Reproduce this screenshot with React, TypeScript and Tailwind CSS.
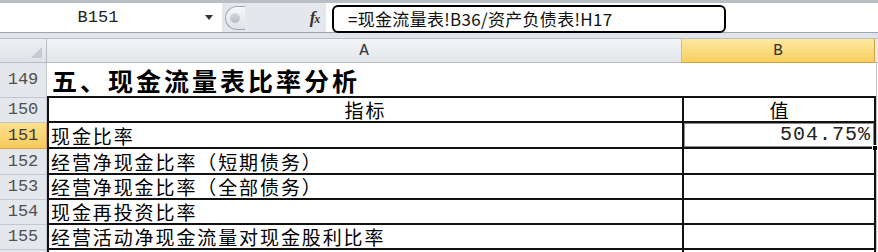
import React from 'react';

const cjk = '"Noto Sans CJK SC", "Noto Sans", sans-serif';
const mono = '"Liberation Mono", "DejaVu Sans Mono", monospace';

type Row = {
  n: number;
  a: string;
  b?: string;
  h: string;
  head?: boolean;
  sel?: boolean;
};

const rows: Row[] = [
  { n: 150, a: '指标', b: '值', h: 'h-[25px]', head: true },
  { n: 151, a: '现金比率', b: '504.75%', h: 'h-[26px]', sel: true },
  { n: 152, a: '经营净现金比率（短期债务）', h: 'h-[26px]' },
  { n: 153, a: '经营净现金比率（全部债务）', h: 'h-[25px]' },
  { n: 154, a: '现金再投资比率', h: 'h-[25px]' },
  { n: 155, a: '经营活动净现金流量对现金股利比率', h: 'h-[25px]' },
];

function RowHead({ n, sel, h }: { n: number; sel?: boolean; h: string }) {
  return (
    <div
      className={`${h} w-[47px] shrink-0 flex items-center justify-center border-r border-b text-[17px] ${
        sel
          ? 'bg-gradient-to-b from-[#fbe08e] to-[#f6ca5c] border-[#d9a441] text-[#3a3a3a]'
          : 'bg-[#e4e7eb] border-[#c3c8cf] text-[#505050]'
      }`}
      style={{ fontFamily: mono }}
    >
      {n}
    </div>
  );
}

export default function App() {
  return (
    <div className="w-[878px] h-[252px] overflow-hidden bg-white" style={{ fontFamily: cjk }}>
      {/* window edge */}
      <div className="h-[3px] bg-[#b9bec5]" />

      {/* Formula bar */}
      <div className="h-[29px] flex bg-[#e4e7eb]">
        <div className="w-[222px] flex items-center bg-white">
          <div className="w-[196px] text-center text-[17px] text-[#222]" style={{ fontFamily: mono }}>
            B151
          </div>
          <div className="w-[26px] flex justify-center">
            <div className="w-0 h-0 border-l-[4px] border-r-[4px] border-t-[5px] border-l-transparent border-r-transparent border-t-[#333]" />
          </div>
        </div>
        <div className="flex items-center pl-[3px]">
          <div className="w-[20px] h-[24px] rounded-l-full border border-r-0 border-[#a3a8ae] bg-gradient-to-b from-[#f7f8f9] to-[#dfe2e6] flex items-center pl-[4px]">
            <div className="w-[10px] h-[10px] rounded-full bg-gradient-to-b from-[#d7dade] to-[#b7bcc2]" />
          </div>
        </div>
        <div className="w-[59px]" />
        <div
          className="w-[22px] flex items-center justify-center text-[17px] italic font-bold text-[#333]"
          style={{ fontFamily: '"Liberation Serif", serif' }}
        >
          f<span className="text-[12px] -ml-[1px] mt-[3px]">x</span>
        </div>
        <div className="flex-1 bg-white pl-[6px] pt-[2px]">
          <div className="w-[394px] h-[28px] border-2 border-black rounded-[6px] flex items-center pl-[14px] text-[17px] text-[#111] tracking-[0.3px]">
            =现金流量表!B36/资产负债表!H17
          </div>
        </div>
      </div>
      <div className="h-[1px] bg-[#9ea5ae]" />
      <div className="h-[5px] bg-[#e1e4e8]" />

      {/* Column headers */}
      <div className="h-[25px] flex border-t border-[#b7bdc5]">
        <div className="w-[47px] shrink-0 border-r border-b border-[#b7bdc5] bg-gradient-to-b from-[#eef0f2] to-[#dfe2e6] flex items-end justify-end pr-[4px] pb-[4px]">
          <svg width="11" height="11" viewBox="0 0 11 11">
            <polygon points="11,0 11,11 0,11" fill="#c6cacf" />
          </svg>
        </div>
        <div
          className="w-[635px] flex items-center justify-center border-r border-b border-[#b7bdc5] bg-gradient-to-b from-[#f3f5f7] to-[#e2e5e9] text-[16px] text-[#333]"
          style={{ fontFamily: mono }}
        >
          A
        </div>
        <div
          className="w-[193px] flex items-center justify-center border-r border-b border-[#d7a23e] bg-gradient-to-b from-[#fde9a0] to-[#f8cf5f] text-[16px] text-[#333]"
          style={{ fontFamily: mono }}
        >
          B
        </div>
        <div className="flex-1 border-b border-[#b7bdc5] bg-[#e8ebee]" />
      </div>

      {/* Row 149: section title */}
      <div className="flex h-[35px]">
        <RowHead n={149} h="h-[35px]" />
        <div className="w-[829px] flex items-end pl-[5px] pb-[3px] border-b-2 border-[#111] text-[25px] font-bold tracking-[3px] text-black leading-none">
          五、现金流量表比率分析
        </div>
        <div className="flex-1 border-l border-[#c3c8cf]" />
      </div>

      {/* Table rows */}
      {rows.map((r) => (
        <div key={r.n} className={`flex ${r.h}`}>
          <RowHead n={r.n} sel={r.sel} h={r.h} />
          <div
            className={`w-[635px] flex items-center border-l-2 border-b-2 border-[#111] text-[19px] tracking-[1.9px] text-black leading-none ${
              r.head ? 'justify-center' : 'pl-[2px]'
            }`}
          >
            {r.a}
          </div>
          <div
            className={`relative w-[194px] flex items-center border-l-2 border-r-2 border-b-2 border-[#111] leading-none ${
              r.head ? 'justify-center text-[19px]' : 'justify-end pr-[3px]'
            } ${r.sel ? 'shadow-[inset_0_0_0_1px_#8a8a8a]' : ''}`}
          >
            {r.sel ? (
              <span className="text-[20px] tracking-[1px] text-[#222]" style={{ fontFamily: mono }}>
                {r.b}
              </span>
            ) : (
              r.b
            )}
            {r.sel && (
              <div className="absolute -right-[4px] -bottom-[4px] w-[6px] h-[6px] bg-black border border-white" />
            )}
          </div>
          <div className="flex-1 border-l border-[#c3c8cf]" />
        </div>
      ))}

      {/* top of next row */}
      <div className="flex h-[4px]">
        <div className="w-[47px] shrink-0 border-r border-[#c3c8cf] bg-[#e4e7eb]" />
        <div className="w-[635px] border-l-2 border-[#111]" />
        <div className="w-[194px] border-l-2 border-r-2 border-[#111]" />
      </div>
    </div>
  );
}
